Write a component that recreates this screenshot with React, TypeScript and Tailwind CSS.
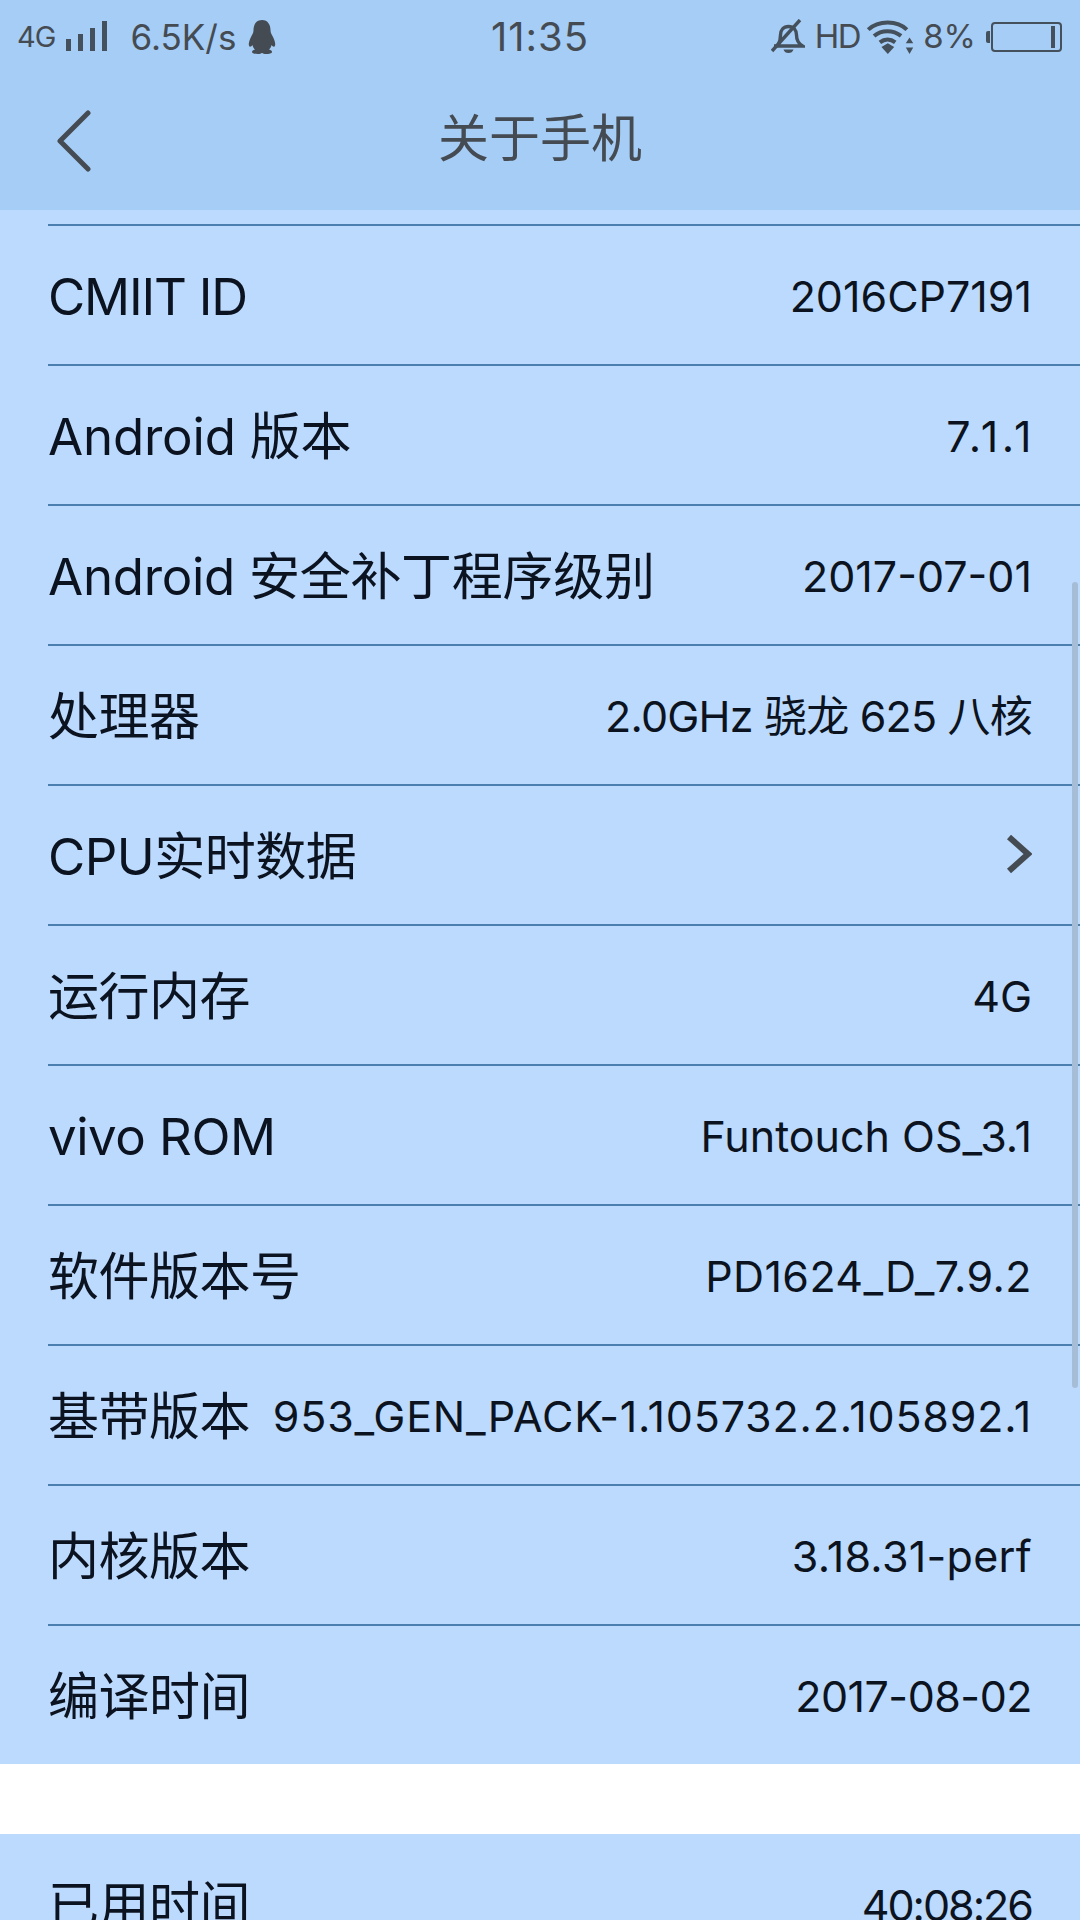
const font = { fontFamily: '"Inter", "Noto Sans CJK SC", sans-serif' }

const rows: { label: string; value?: string; arrow?: boolean; labelClass?: string; valueClass?: string }[] = [
  { label: 'CMIIT ID', value: '2016CP7191', labelClass: 'tracking-[-1.200px]' },
  { label: 'Android 版本', value: '7.1.1', labelClass: 'tracking-[-0.200px]', valueClass: 'tracking-[3.500px] -mr-[3px]' },
  { label: 'Android 安全补丁程序级别', value: '2017-07-01', labelClass: 'tracking-[-0.300px]' },
  { label: '处理器', value: '2.0GHz 骁龙 625 八核', valueClass: 'tracking-[-0.800px]' },
  { label: 'CPU实时数据', arrow: true },
  { label: '运行内存', value: '4G' },
  { label: 'vivo ROM', value: 'Funtouch OS_3.1' },
  { label: '软件版本号', value: 'PD1624_D_7.9.2', valueClass: 'tracking-[0.400px]' },
  { label: '基带版本', value: '953_GEN_PACK-1.105732.2.105892.1', valueClass: 'tracking-[0.800px]' },
  { label: '内核版本', value: '3.18.31-perf', valueClass: 'tracking-[0.300px]' },
  { label: '编译时间', value: '2017-08-02', valueClass: 'tracking-[-0.500px]' },
]

const Signal = () => (
  <svg width="42" height="32" viewBox="0 0 42 32" fill="#44505c">
    <rect x="0" y="18" width="5" height="12" />
    <rect x="12" y="13" width="5" height="17" />
    <rect x="24" y="7" width="5" height="23" />
    <rect x="36" y="0" width="5" height="30" />
  </svg>
)

const Penguin = () => (
  <svg width="28" height="34" viewBox="0 0 28 34" fill="#454b52">
    <path d="M14 0c6 0 8.500 5 8.500 10 0 3 1 4 2.500 7 2 4 3 8 1.500 9.500-.8.700-2-.2-3-1.500-.4 2-1.400 3.500-2.500 4.500 2 .6 3 1.500 3 2.500 0 1.500-3 2-6 2-2 0-3-.5-4-1-1 .5-2 1-4 1-3 0-6-.5-6-2 0-1 1-1.900 3-2.500-1.100-1-2.100-2.500-2.500-4.500-1 1.300-2.200 2.200-3 1.500-1.500-1.500-.5-5.500 1.500-9.500 1.500-3 2.500-4 2.500-7C5.500 5 8 0 14 0z" />
  </svg>
)

const MutedBell = () => (
  <svg width="34" height="36" viewBox="0 0 34 36" fill="none" stroke="#44505c" strokeWidth="3.400">
    <path d="M7 26c2-3 2.500-6 2.500-10 0-5 3-8.500 8-8.500s8 3.500 8 8.500c0 4 1 8 6 11H3" />
    <path d="M12.500 30.500h10c-.8 2.500-2.500 3.500-5 3.500s-4.200-1-5-3.500z" fill="#44505c" stroke="none" />
    <path d="M1 32 29 1" />
  </svg>
)

const Wifi = () => (
  <svg width="50" height="36" viewBox="0 0 46 34" fill="none" stroke="#44505c" strokeWidth="3.800">
    <path d="M1.500 10C11 1 29 1 38 10" />
    <path d="M7 16c7-6 18-6 25.500 0" />
    <path d="M12.500 22c4.500-3.500 10-3.500 14.500 0" />
    <path d="M14 26.500 20 23l6 3.500L20 33z" fill="#44505c" stroke="none" />
    <path d="M40.500 17.500 44 23h-7zM40.500 33 44 27h-7z" fill="#44505c" stroke="none" />
  </svg>
)

const Battery = () => (
  <div className="flex items-center gap-[1px]">
    <div className="h-[12px] w-[4px] rounded-l-[2px] bg-[#44505c]" />
    <div className="flex h-[30px] w-[71px] items-center justify-end rounded-[4px] border-2 border-[#44505c] pr-[5px]">
      <div className="h-[22px] w-[4px] bg-[#44505c]" />
    </div>
  </div>
)

export default function App() {
  return (
    <div className="relative h-[1920px] w-[1080px] overflow-hidden bg-white" style={font}>
      <header className="h-[210px] bg-[#a6cdf5] text-[#454b52]">
        <div className="relative flex h-[72px] items-center justify-between pr-[18px] pl-[17px] pt-[2px]">
          <div className="flex items-center">
            <span className="text-[29px] tracking-[-1px]">4G</span>
            <span className="ml-[11px]"><Signal /></span>
            <span className="ml-[22px] text-[35px]">6.5K/s</span>
            <span className="ml-[12px]"><Penguin /></span>
          </div>
          <div className="absolute left-0 right-0 text-center text-[40px] tracking-[1px]">11:35</div>
          <div className="flex items-center">
            <MutedBell />
            <span className="ml-[10px] text-[33px] tracking-[-1.500px]">HD</span>
            <span className="ml-[6px]"><Wifi /></span>
            <span className="ml-[7px] text-[33px]">8%</span>
            <span className="ml-[10px]"><Battery /></span>
          </div>
        </div>
        <div className="relative flex h-[138px] items-center justify-center pb-[6px]">
          <svg className="absolute left-[55px] top-[38px]" width="40" height="62" viewBox="0 0 40 62" fill="none" stroke="#454b52" strokeWidth="5" strokeLinecap="round" strokeLinejoin="round">
            <path d="M33 3 5 31l28 28" />
          </svg>
          <h1 className="text-[51px] font-normal leading-none">关于手机</h1>
        </div>
      </header>

      <section className="bg-[#bcdafd] pt-[14px] text-[#0c1320]">
        {rows.map((row) => (
          <div key={row.label} className="ml-[48px] flex h-[140px] items-center justify-between border-t-2 border-[#4a7fb0] pr-[48px] pt-[3px]">
            <span className={`text-[51px] leading-none whitespace-nowrap ${row.labelClass ?? 'tracking-[-0.500px]'}`}>{row.label}</span>
            {row.arrow ? (
              <svg className="-mt-[5px]" width="26" height="40" viewBox="0 0 26 40" fill="none" stroke="#454b52" strokeWidth="6">
                <path d="M3 3 22 20 3 37" />
              </svg>
            ) : (
              <span className={`text-[43px] leading-none whitespace-nowrap ${row.valueClass ?? ''}`}>{row.value}</span>
            )}
          </div>
        ))}
      </section>

      <section className="mt-[70px] bg-[#bcdafd] text-[#0c1320]">
        <div className="ml-[48px] flex h-[140px] items-center justify-between pr-[48px] pt-[3px]">
          <span className="text-[51px] leading-none tracking-[-0.500px]">已用时间</span>
          <span className="text-[43px] leading-none tracking-[-2px]">40:08:26</span>
        </div>
      </section>

      <div className="absolute left-[1072px] top-[582px] h-[806px] w-[6px] rounded-full bg-[#a6bdd8]" />
    </div>
  )
}
